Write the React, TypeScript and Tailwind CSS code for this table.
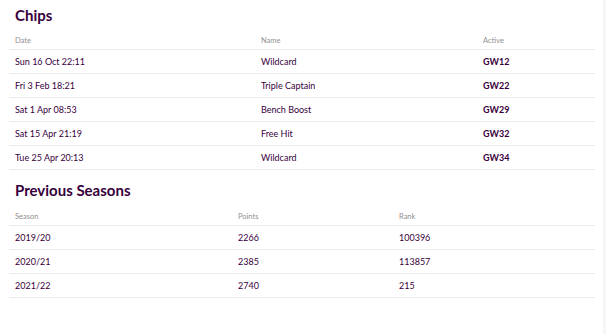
import React from "react";

const chips = [
  ["Sun 16 Oct 22:11", "Wildcard", "GW12"],
  ["Fri 3 Feb 18:21", "Triple Captain", "GW22"],
  ["Sat 1 Apr 08:53", "Bench Boost", "GW29"],
  ["Sat 15 Apr 21:19", "Free Hit", "GW32"],
  ["Tue 25 Apr 20:13", "Wildcard", "GW34"],
];

const seasons = [
  ["2019/20", "2266", "100396"],
  ["2020/21", "2385", "113857"],
  ["2021/22", "2740", "215"],
];

export default function App() {
  return (
    <div
      className="w-[606px] h-[334px] bg-white flex text-[#37003c]"
      style={{ fontFamily: "Lato, 'Open Sans', sans-serif" }}
    >
      <div className="w-[595px] pl-[9px] pt-[5px]">
        <h2 className="pl-[6px] h-[20px] leading-[20px] text-[15px] font-bold">Chips</h2>
        <div className="mt-[8px]">
          <div className="grid grid-cols-[246px_222px_1fr] h-[17px] border-b border-[#ebebeb] text-[7.5px] text-[#8f8f8f] items-center">
            <div className="pl-[6px]">Date</div>
            <div className="pl-[6px]">Name</div>
            <div className="pl-[6px]">Active</div>
          </div>
          {chips.map((r, i) => (
            <div
              key={i}
              className="grid grid-cols-[246px_222px_1fr] h-[24px] border-b border-[#ebebeb] text-[9px] items-center"
            >
              <div className="pl-[6px]">{r[0]}</div>
              <div className="pl-[6px]">{r[1]}</div>
              <div className="pl-[6px] font-bold">{r[2]}</div>
            </div>
          ))}
        </div>
        <h2 className="mt-[10px] pl-[6px] h-[20px] leading-[20px] text-[15px] font-bold">
          Previous Seasons
        </h2>
        <div className="mt-[9px]">
          <div className="grid grid-cols-[223px_161px_1fr] h-[17px] border-b border-[#ebebeb] text-[7.5px] text-[#8f8f8f] items-center">
            <div className="pl-[6px]">Season</div>
            <div className="pl-[6px]">Points</div>
            <div className="pl-[6px]">Rank</div>
          </div>
          {seasons.map((r, i) => (
            <div
              key={i}
              className="grid grid-cols-[223px_161px_1fr] h-[24px] border-b border-[#ebebeb] text-[9px] items-center"
            >
              <div className="pl-[6px]">{r[0]}</div>
              <div className="pl-[6px]">{r[1]}</div>
              <div className="pl-[6px]">{r[2]}</div>
            </div>
          ))}
        </div>
      </div>
      <div className="flex-1" />
      <div className="w-[3px] h-full bg-[#f6f6f6]" />
    </div>
  );
}
